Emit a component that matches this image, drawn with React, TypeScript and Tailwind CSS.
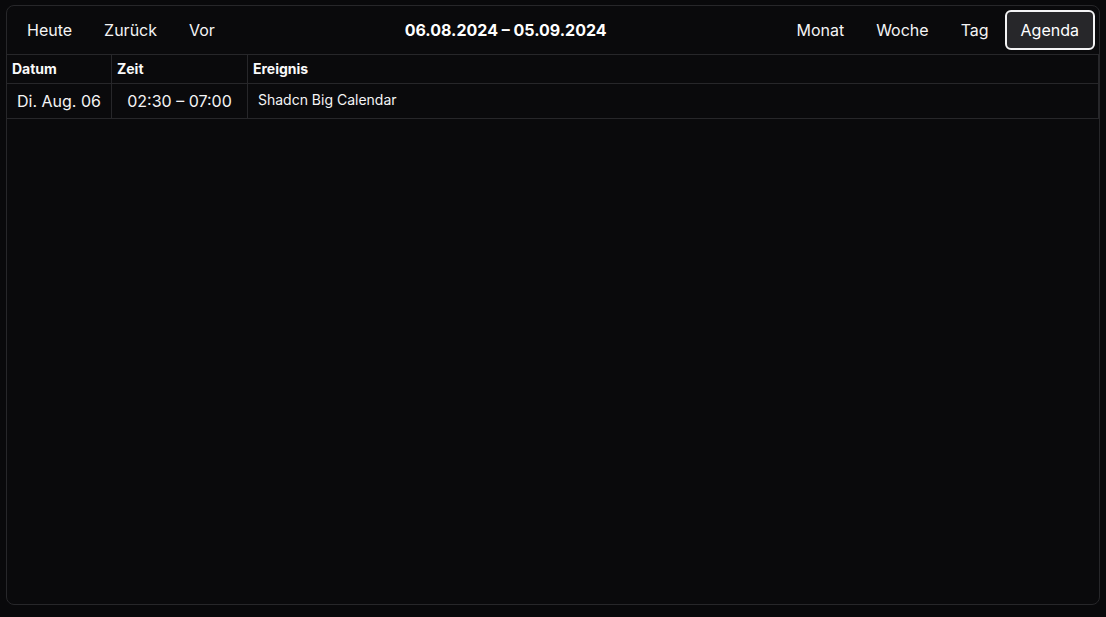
import React from 'react'

const views = ['Monat', 'Woche', 'Tag', 'Agenda']

export default function App() {
  return (
    <div className="min-h-screen bg-[#09090b] px-[6px] pt-[5px] text-[#fafafa]" style={{ fontFamily: 'Inter, "Noto Sans", sans-serif' }}>
      <div className="flex h-[600px] w-[1094px] flex-col overflow-hidden rounded-lg border border-[#27272a] bg-[#0a0a0c]">
        {/* Toolbar */}
        <div className="flex items-center p-1">
          <div className="flex">
            {['Heute', 'Zurück', 'Vor'].map((b) => (
              <button key={b} className="h-10 rounded-md px-4 text-base text-[#f4f4f5]">
                {b}
              </button>
            ))}
          </div>
          <div className="flex-1 text-center">
            <span className="text-base font-bold text-white">06.08.2024 – 05.09.2024</span>
          </div>
          <div className="flex">
            {views.map((v) =>
              v === 'Agenda' ? (
                <button key={v} className="h-10 rounded-md border-2 border-[#f4f4f5] bg-[#27272a] px-[14px] text-base text-white">
                  {v}
                </button>
              ) : (
                <button key={v} className="h-10 rounded-md px-4 text-base text-[#f4f4f5]">
                  {v}
                </button>
              ),
            )}
          </div>
        </div>

        {/* Agenda table */}
        <table className="w-full border-collapse border-y border-r border-[#27272a] text-left">
          <thead>
            <tr className="h-[29px]">
              <th className="w-[104px] border-r border-[#27272a] px-[5px] pb-[1px] text-sm font-bold">Datum</th>
              <th className="w-[136px] border-r border-[#27272a] px-[5px] pb-[1px] text-sm font-bold">Zeit</th>
              <th className="px-[5px] pb-[1px] text-sm font-bold">Ereignis</th>
            </tr>
          </thead>
          <tbody>
            <tr className="h-[34px] border-t border-[#27272a] align-top">
              <td className="whitespace-nowrap border-r border-[#27272a] px-[10px] py-[5px] text-base text-[#f4f4f5]">Di. Aug. 06</td>
              <td className="whitespace-nowrap border-r border-[#27272a] px-[10px] py-[5px] text-center text-base text-[#f4f4f5]">02:30 – 07:00</td>
              <td className="px-[10px] py-[6px] text-sm text-[#f4f4f5]">Shadcn Big Calendar</td>
            </tr>
          </tbody>
        </table>
      </div>
    </div>
  )
}
